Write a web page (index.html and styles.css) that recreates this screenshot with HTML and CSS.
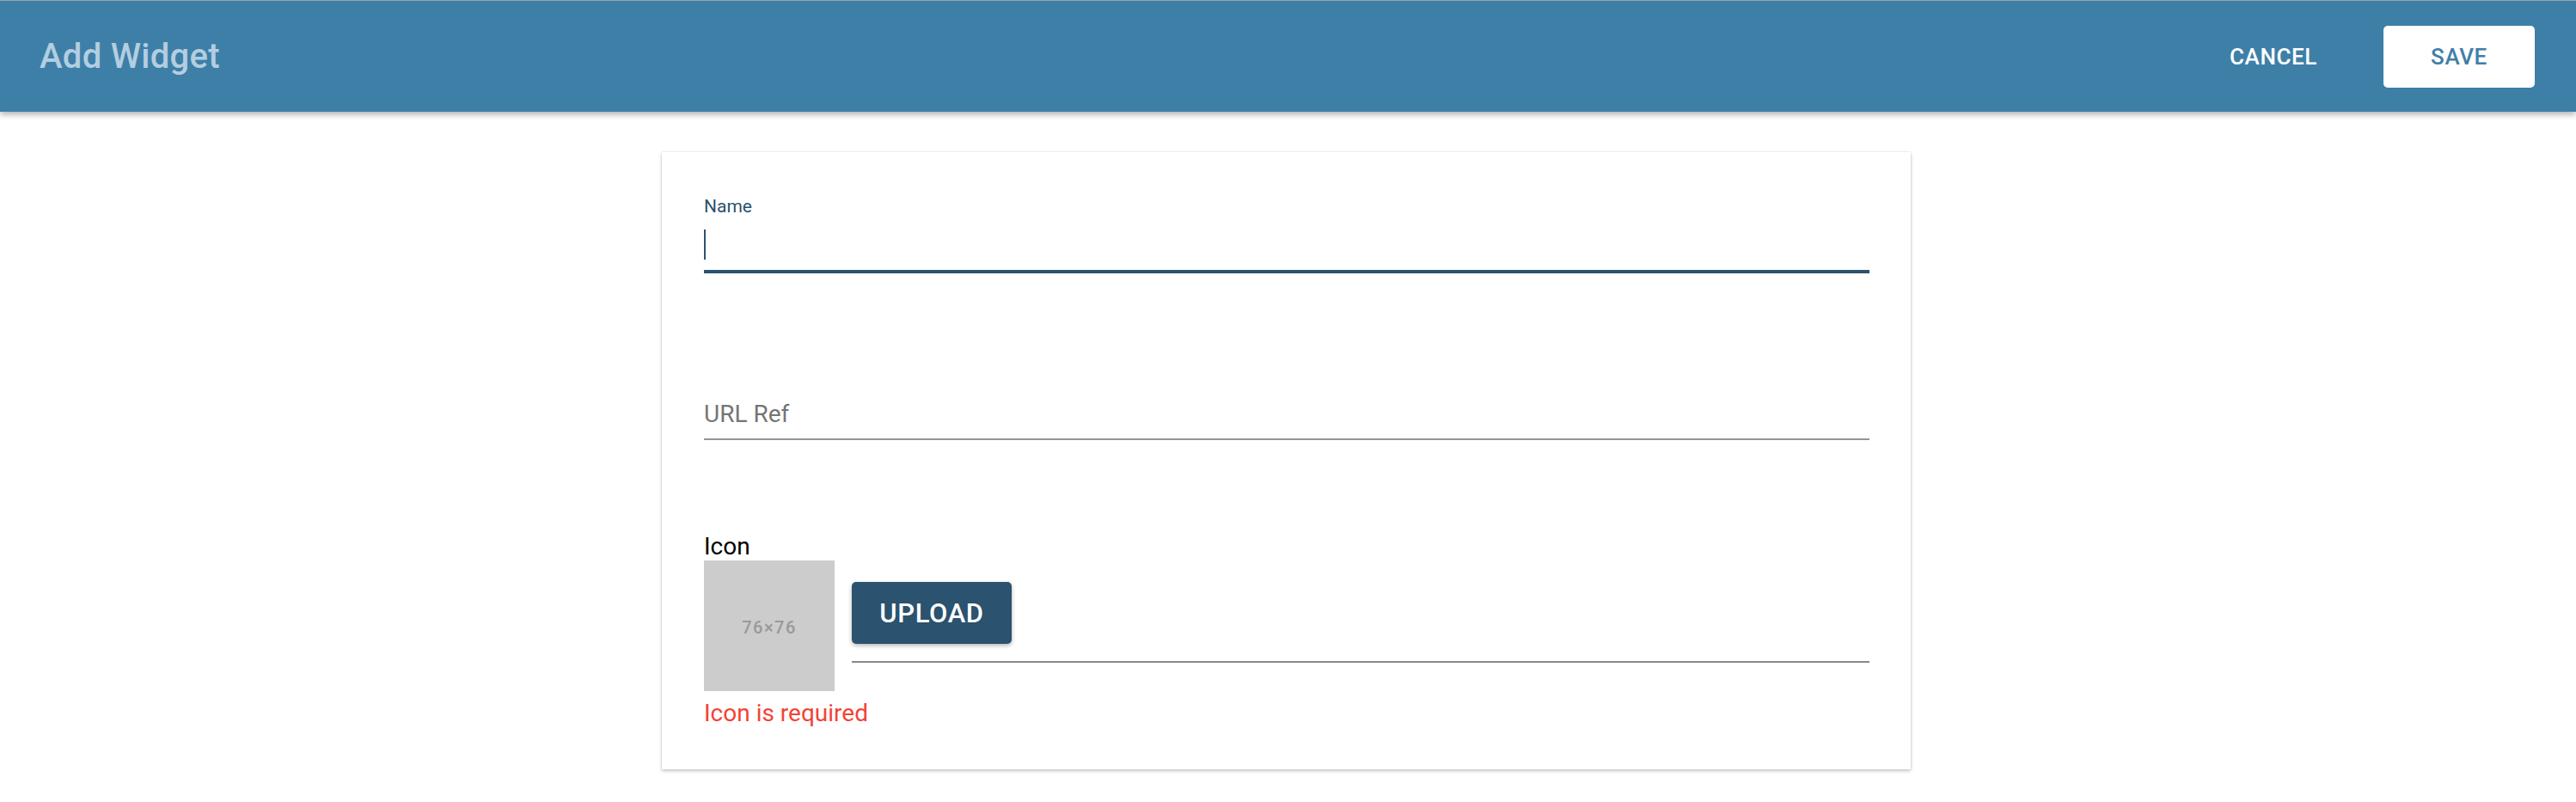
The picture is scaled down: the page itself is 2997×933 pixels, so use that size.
FILE: index.html
```html
<!DOCTYPE html>
<html lang="en">
<head>
<meta charset="utf-8">
<title>Add Widget</title>
<link rel="stylesheet" href="styles.css">
</head>
<body>
<header class="topbar">
  <h1 class="title">Add Widget</h1>
  <div class="actions">
    <button class="btn btn-text" type="button">CANCEL</button>
    <button class="btn btn-save" type="button">SAVE</button>
  </div>
</header>
<main class="main">
  <section class="card">
    <div class="field field-name">
      <label class="label-shrunk">Name</label>
      <div class="name-input"><span class="caret"></span></div>
    </div>
    <div class="field field-url">
      <span class="placeholder-label">URL Ref</span>
    </div>
    <div class="icon-label">Icon</div>
    <div class="icon-row">
      <div class="icon-thumb"><span class="thumb-text">76×76</span></div>
      <div class="upload-col">
        <button class="btn btn-upload" type="button">UPLOAD</button>
      </div>
    </div>
    <div class="error">Icon is required</div>
  </section>
</main>
</body>
</html>
```

FILE: styles.css
```css
html, body {
  margin: 0;
  padding: 0;
  background: #ffffff;
  font-family: Roboto, "Liberation Sans", Arial, sans-serif;
}

.topbar {
  position: relative;
  z-index: 1;
  height: 129px;
  border-top: 1px solid #9aa3aa;
  background: #3e7fa8;
  display: flex;
  align-items: center;
  justify-content: space-between;
  padding: 0 48px 0 46px;
  box-shadow: 0 3px 7px rgba(0, 0, 0, 0.32);
}

.title {
  margin: 0;
  font-size: 40px;
  font-weight: 500;
  color: #b3cee0;
  letter-spacing: 0.3px;
}

.actions {
  display: flex;
  align-items: center;
  gap: 40px;
}

.btn {
  font-family: Roboto, "Liberation Sans", Arial, sans-serif;
  font-weight: 500;
  border: none;
  cursor: pointer;
  border-radius: 5px;
  padding: 0;
}

.btn-text,
.btn-save {
  min-width: 176px;
  height: 72px;
  font-size: 26px;
  letter-spacing: 0.6px;
}

.btn-text {
  background: transparent;
  color: #ffffff;
}

.btn-save {
  background: #ffffff;
  color: #3e7fa8;
}

.main {
  padding: 47px 4px 40px 0;
}

.card {
  width: 1453px;
  box-sizing: border-box;
  margin: 0 auto;
  padding: 51px 48px 49px 49px;
  background: #ffffff;
  box-shadow: 0 2px 4px rgba(0, 0, 0, 0.22), 0 0 2px rgba(0, 0, 0, 0.12);
}

.field {
  display: flex;
  flex-direction: column;
}

.label-shrunk {
  font-size: 21px;
  line-height: 25px;
  color: #2b526e;
}

.name-input {
  height: 61px;
  border-bottom: 4px solid #2b526e;
  box-sizing: content-box;
}

.caret {
  display: block;
  width: 2px;
  height: 35px;
  margin-top: 14px;
  background: #2b526e;
}

.field-url {
  margin-top: 147px;
  border-bottom: 2px solid #949494;
}

.placeholder-label {
  font-size: 28px;
  line-height: 33px;
  padding-bottom: 12px;
  color: #757575;
}

.icon-label {
  margin-top: 107px;
  font-size: 28px;
  line-height: 33px;
  color: #000000;
}

.icon-row {
  display: flex;
  align-items: flex-start;
  gap: 20px;
}

.icon-thumb {
  width: 152px;
  height: 152px;
  background: #cccccc;
  display: flex;
  align-items: center;
  justify-content: center;
  flex: none;
}

.thumb-text {
  font-size: 20px;
  font-weight: 500;
  letter-spacing: 1.5px;
  color: #999999;
  padding-top: 4px;
}

.upload-col {
  flex: 1;
  padding: 25px 0 20px;
  border-bottom: 2px solid #888888;
}

.btn-upload {
  display: block;
  width: 186px;
  height: 72px;
  background: #2b526e;
  color: #ffffff;
  font-size: 31px;
  font-weight: 500;
  letter-spacing: 0.6px;
  box-shadow: 0 2px 5px rgba(0, 0, 0, 0.3);
}

.error {
  margin-top: 9px;
  font-size: 28px;
  line-height: 33px;
  color: #f44336;
}
```
